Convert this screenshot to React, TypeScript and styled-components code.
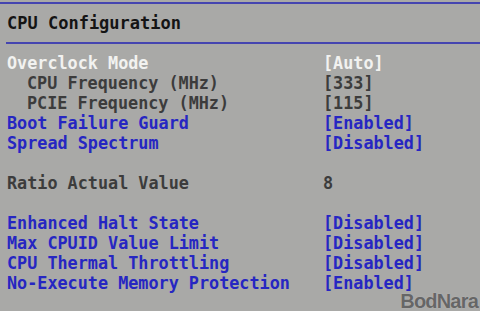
import styled, { createGlobalStyle } from "styled-components";

const GlobalStyle = createGlobalStyle`
  html, body {
    margin: 0;
    padding: 0;
    background: #a9a9a7;
  }
`;

const Screen = styled.div`
  position: relative;
  width: 480px;
  height: 311px;
  overflow: hidden;
  background: #a9a9a7;
  font-family: "DejaVu Sans Mono", "Liberation Mono", monospace;
  font-weight: bold;
  font-size: 16.8px;
  line-height: 20px;
  display: flex;
  flex-direction: column;
`;

const Rule = styled.div<{ inset?: number; gap: number }>`
  height: 2px;
  margin-top: ${(p) => p.gap}px;
  margin-left: ${(p) => p.inset ?? 0}px;
  background: #4545b0;
`;

const Title = styled.div`
  margin-top: 9px;
  padding-left: 7px;
  color: #141414;
  font-size: 17px;
  height: 20px;
`;

const List = styled.div`
  margin-top: 9px;
  padding-left: 7px;
  display: grid;
  grid-template-columns: 316px 1fr;
  grid-auto-rows: 20px;
`;

type Tone = "white" | "grey" | "blue";

const tones: Record<Tone, string> = {
  white: "#f2f2f0",
  grey: "#3c3c3c",
  blue: "#2626c2",
};

const Label = styled.div<{ tone: Tone; indent?: boolean }>`
  color: ${(p) => tones[p.tone]};
  padding-left: ${(p) => (p.indent ? 20 : 0)}px;
  white-space: pre;
`;

const Value = styled.div<{ tone: Tone }>`
  color: ${(p) => tones[p.tone]};
  white-space: pre;
`;

const Watermark = styled.div`
  position: absolute;
  right: 2px;
  bottom: 0px;
  font-family: "Liberation Sans", Arial, sans-serif;
  font-weight: bold;
  font-size: 20px;
  letter-spacing: -0.8px;
  color: #666666;
  text-shadow: 0 0 1px #c8c8c8;
`;

type Row = { label: string; value: string; tone: Tone; indent?: boolean } | null;

const rows: Row[] = [
  { label: "Overclock Mode", value: "[Auto]", tone: "white" },
  { label: "CPU Frequency (MHz)", value: "[333]", tone: "grey", indent: true },
  { label: "PCIE Frequency (MHz)", value: "[115]", tone: "grey", indent: true },
  { label: "Boot Failure Guard", value: "[Enabled]", tone: "blue" },
  { label: "Spread Spectrum", value: "[Disabled]", tone: "blue" },
  null,
  { label: "Ratio Actual Value", value: "8", tone: "grey" },
  null,
  { label: "Enhanced Halt State", value: "[Disabled]", tone: "blue" },
  { label: "Max CPUID Value Limit", value: "[Disabled]", tone: "blue" },
  { label: "CPU Thermal Throttling", value: "[Disabled]", tone: "blue" },
  { label: "No-Execute Memory Protection", value: "[Enabled]", tone: "blue" },
];

export default function App() {
  return (
    <Screen>
      <GlobalStyle />
      <Rule gap={2} />
      <Title>CPU Configuration</Title>
      <Rule gap={9} inset={6} />
      <List>
        {rows.flatMap((r, i) => [
          <Label key={`l${i}`} tone={r ? r.tone : "grey"} indent={r?.indent}>
            {r?.label}
          </Label>,
          <Value key={`v${i}`} tone={r ? r.tone : "grey"}>
            {r?.value}
          </Value>,
        ])}
      </List>
      <Watermark>BodNara</Watermark>
    </Screen>
  );
}
